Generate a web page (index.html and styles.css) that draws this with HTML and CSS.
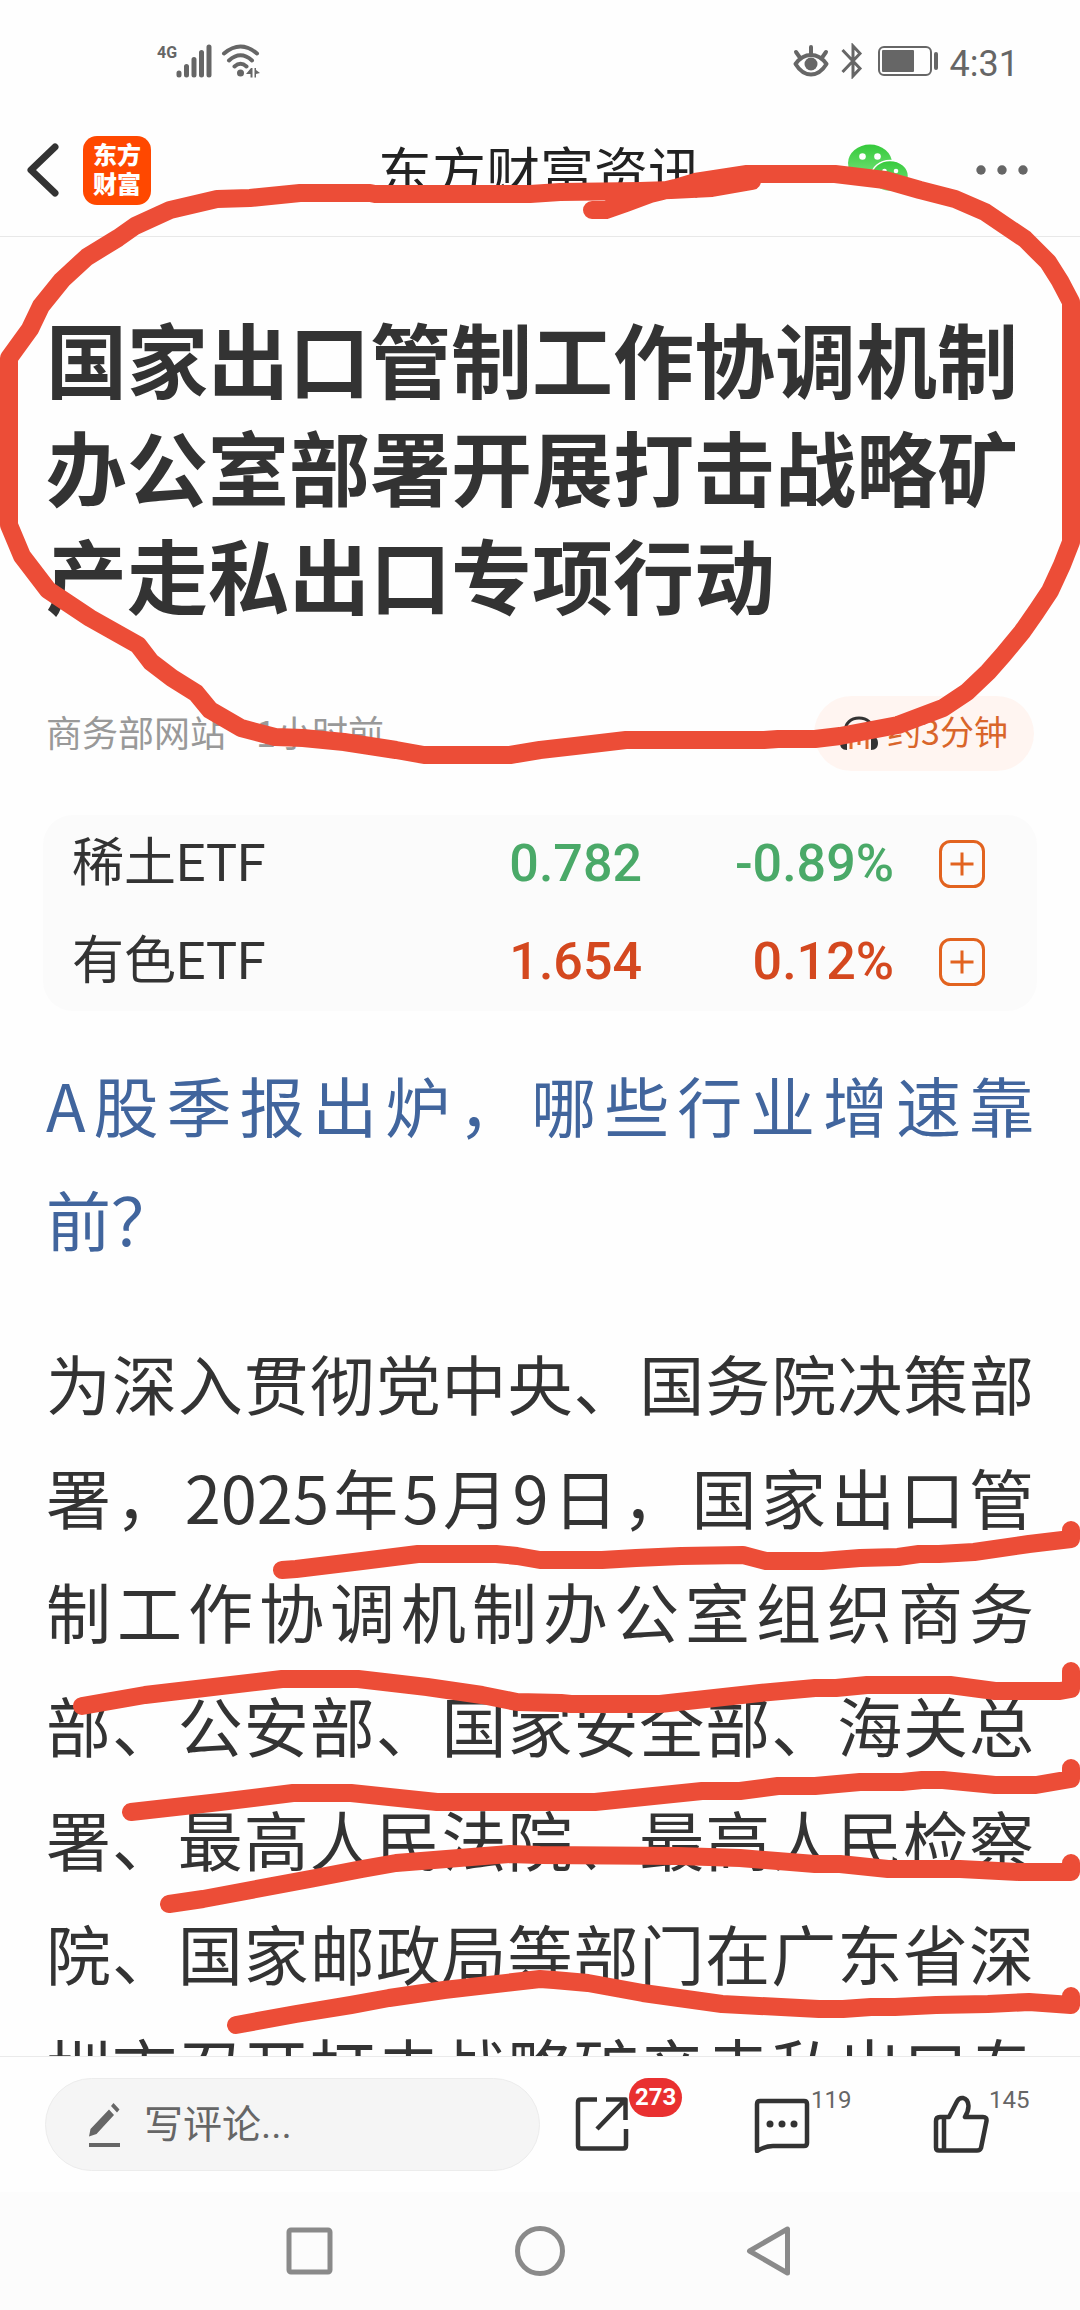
FILE: index.html
```html
<!DOCTYPE html>
<html lang="zh-CN">
<head>
<meta charset="utf-8">
<meta name="viewport" content="width=device-width, initial-scale=1">
<title>东方财富资讯</title>
<link rel="stylesheet" href="styles.css">
</head>
<body>
<div class="screen">
  <div class="status">
    <div class="status-group">
      <span class="network">4G</span>
      <svg class="signal" width="36" height="34" viewBox="0 0 36 34" fill="none" stroke="#666" stroke-width="5" stroke-linecap="round"><path d="M3 29v2M10.500 22.500v8.500M18 15.500v15.500M25.500 8.500v22.500M33 3v28"/></svg>
      <svg class="wifi" width="40" height="34" viewBox="0 0 40 34" fill="none" stroke="#666" stroke-width="4" stroke-linecap="round"><path d="M3 9.500Q19.500-4.500 36 9.500M8 16.500Q19.500 6 31 16.500M13.500 22.500Q19.500 17 25.500 22.500"/><circle cx="19.500" cy="29" r="3.500" fill="#666" stroke="none"/><path d="M25 30l5-6h1.500v9.500h-2V30zM33.500 24h1.500v2l4 3-4 1v3.500h-1.500z" fill="#666" stroke="none"/></svg>
    </div>
    <div class="status-group">
      <svg width="36" height="34" viewBox="0 0 36 34" fill="none" stroke="#666" stroke-width="4" stroke-linecap="round" stroke-linejoin="round"><path d="M2.500 20Q9 11 18 11T33.500 20Q27 30.500 18 30.500T2.500 20zM18 3v8M3 8l3.500 5M33 8l-3.500 5"/><circle cx="18" cy="20" r="6.500" fill="#666" stroke="none"/></svg>
      <svg class="bluetooth" width="22" height="36" viewBox="0 0 22 36" fill="none" stroke="#666" stroke-width="3"><path d="M1.500 7L19 25.500 12 33V3l7 7.500L1.500 29"/></svg>
      <svg class="battery" width="60" height="30" viewBox="0 0 60 30"><rect x="1" y="1" width="52" height="28" rx="5" fill="none" stroke="#666" stroke-width="2"/><rect x="4" y="4" width="32" height="22" rx="1" fill="#666"/><rect x="56" y="6" width="4" height="18" rx="2" fill="#666"/></svg>
      <span class="clock">4:31</span>
    </div>
  </div>

  <header class="topbar">
    <div class="topbar-left">
      <button class="icon-button" aria-label="返回"><svg width="34" height="56" viewBox="0 0 34 56" fill="none" stroke="#333" stroke-width="7" stroke-linecap="round" stroke-linejoin="round"><path d="M29 5L5 28l24 23"/></svg></button>
      <a class="logo" href="#">东方<br>财富</a>
    </div>
    <span class="topbar-title">东方财富资讯</span>
    <div class="topbar-right">
      <button class="icon-button" aria-label="微信分享"><svg width="62" height="52" viewBox="0 0 62 52"><defs><linearGradient id="leaf" x1="0" y1="0" x2="0" y2="1"><stop offset="0" stop-color="#35c93b"/><stop offset="1" stop-color="#7be67f"/></linearGradient></defs><ellipse cx="22" cy="19" rx="22" ry="18.500" fill="url(#leaf)"/><path d="M8 30l-2 9 9-4z" fill="#6de072"/><circle cx="14.500" cy="12.500" r="3.300" fill="#fff"/><circle cx="29.500" cy="12.500" r="3.300" fill="#fff"/><ellipse cx="42" cy="32" rx="18.500" ry="15.500" fill="url(#leaf)" stroke="#fff" stroke-width="1.500"/><circle cx="36.500" cy="27" r="2.300" fill="#fff"/><circle cx="48" cy="27" r="2.300" fill="#fff"/></svg></button>
      <button class="icon-button" aria-label="更多"><svg width="52" height="10" viewBox="0 0 52 10" fill="#666"><circle cx="5" cy="5" r="4.700"/><circle cx="26" cy="5" r="4.700"/><circle cx="47" cy="5" r="4.700"/></svg></button>
    </div>
  </header>

  <main class="article">
    <h1 class="headline">国家出口管制工作协调机制办公室部署开展打击战略矿产走私出口专项行动</h1>
    <div class="byline">
      <span class="source">商务部网站</span>
      <span class="time">1小时前</span>
      <button class="listen"><svg width="40" height="38" viewBox="0 0 40 38" fill="none"><path d="M6 26V17C6 8 12 3 20 3s14 5 14 14v9" stroke="#333" stroke-width="3"/><path d="M8 21v14C3 35 1 32 1 28s2-7 7-7zM32 21v14c5 0 7-3 7-7s-2-7-7-7z" fill="#333"/><path d="M12 21v13M28 21v13M20 24v6" stroke="#e06a2c" stroke-width="3"/></svg><span>约3分钟</span></button>
    </div>

    <table class="quotes">
      <colgroup><col><col class="col-price"><col class="col-change"><col class="col-add"></colgroup>
      <tbody>
        <tr class="down">
          <th scope="row">稀土ETF</th><td>0.782</td><td>-0.89%</td>
          <td><button class="icon-button" aria-label="添加稀土ETF"><svg width="46" height="48" viewBox="0 0 46 48" fill="none" stroke="#e2631f" stroke-width="3"><rect x="1.500" y="1.500" width="43" height="45" rx="10"/><path d="M11.500 24h23M23 12.500v23"/></svg></button></td>
        </tr>
        <tr class="up">
          <th scope="row">有色ETF</th><td>1.654</td><td>0.12%</td>
          <td><button class="icon-button" aria-label="添加有色ETF"><svg width="46" height="48" viewBox="0 0 46 48" fill="none" stroke="#e2631f" stroke-width="3"><rect x="1.500" y="1.500" width="43" height="45" rx="10"/><path d="M11.500 24h23M23 12.500v23"/></svg></button></td>
        </tr>
      </tbody>
    </table>

    <a class="promo" href="#">A股季报出炉，哪些行业增速靠前？</a>
    <p class="story">为深入贯彻党中央、国务院决策部署，2025年5月9日，国家出口管制工作协调机制办公室组织商务部、公安部、国家安全部、海关总署、最高人民法院、最高人民检察院、国家邮政局等部门在广东省深圳市召开打击战略矿产走私出口专</p>
  </main>

  <footer class="actionbar">
    <label class="comment">
      <svg width="34" height="46" viewBox="0 0 34 46" fill="#666"><path d="M21 7.500l5 5.500L8.500 32 1 34.500 2.500 27zM23 4l2.500-3 6 6.500-2.500 3z"/><path d="M1 41h31v4H1z"/></svg>
      <input type="text" placeholder="写评论..." aria-label="写评论">
    </label>
    <div class="actions">
      <button class="action" aria-label="分享"><svg width="54" height="58" viewBox="0 0 54 58" fill="none" stroke="#333" stroke-width="4.500" stroke-linejoin="round"><path d="M22 4.500H6q-3 0-3 3v43q0 3 3 3h42q3 0 3-3V34M31 4.500h19.500V25M50 5L22 34" stroke-linecap="butt"/></svg><span class="badge">273</span></button>
      <button class="action" aria-label="评论"><svg width="60" height="58" viewBox="-3 0 60 58" fill="none" stroke="#333" stroke-width="4.500" stroke-linejoin="round"><path d="M6 6h44q3 0 3 3v39q0 3-3 3H19Q11 51 3 56V9q0-3 3-3z"/><g fill="#333" stroke="none"><circle cx="16" cy="29" r="3.500"/><circle cx="28" cy="29" r="3.500"/><circle cx="40" cy="29" r="3.500"/></g></svg><span class="count">119</span></button>
      <button class="action" aria-label="点赞"><svg width="56" height="58" viewBox="0 0 56 58" fill="none" stroke="#333" stroke-width="4.500" stroke-linejoin="round"><path d="M11 22h5l8-15.500Q26 2.500 30 3q5 1 5.500 8Q35.500 16 32 22h18q4 0 3.500 4L48 53q-1 2.500-4 2.500H6q-3 0-3-3V26q0-4 4-4zM11 22v33"/></svg><span class="count">145</span></button>
    </div>
  </footer>

  <nav class="sysnav">
    <button class="icon-button" aria-label="最近任务"><svg width="50" height="52" viewBox="0 0 50 52" fill="none" stroke="#8a8a8a" stroke-width="5"><rect x="4" y="5" width="41" height="42" rx="2"/></svg></button>
    <button class="icon-button" aria-label="主屏幕"><svg width="50" height="52" viewBox="0 0 50 52" fill="none" stroke="#8a8a8a" stroke-width="5"><circle cx="25" cy="26" r="22.500"/></svg></button>
    <button class="icon-button" aria-label="返回上一级"><svg width="50" height="52" viewBox="0 0 50 52" fill="none" stroke="#8a8a8a" stroke-width="5" stroke-linejoin="round"><path d="M42.500 4v44L4.500 26z"/></svg></button>
  </nav>

  <svg class="marker" viewBox="0 0 1080 2310" preserveAspectRatio="none" aria-hidden="true">
    <path d="M592 210L606 210 626 203 650 194 675 188 695 182 747 174 835 174 885 180 920 190 955 199 985 212 1025 239 1048 262 1060 281 1071 302V542L1062 565 1050 591 1036 612 1022 632 1003 655 988 672 967 692 943 708 898 725 840 736 815 739 778 739 764 740 626 740 575 746 540 750 510 755 424 755 396 750 344 742 303 738 275 737 241 728 210 710 196 693 172 678 151 662 138 645 90 618 48 590 22 556 9 525V358L30 329 41 306 62 280 87 257 118 238 135 226 170 210 217 199 250 198 300 193 370 193 375 194 530 194 560 192 640 191 671 190 712 188 752 181"/>
    <path d="M282 1570L296 1569 362 1561 418 1554 496 1554 517 1556 540 1560 602 1560 636 1558 681 1556 743 1555 766 1561 822 1561 860 1558 898 1557 919 1554 939 1554 974 1552 1029 1544 1071 1539V1530"/>
    <path d="M82 1706L145 1695 282 1679 358 1679 427 1687 482 1695 517 1702 561 1703 571 1704 660 1704 760 1693 815 1688 836 1688 867 1685 950 1685 995 1691 1060 1691 1071 1689V1671"/>
    <path d="M131 1812L220 1802 293 1793 351 1793 437 1802 595 1802 702 1791 740 1791 778 1786 815 1786 860 1782 902 1782 922 1780 943 1780 995 1785 1036 1785 1071 1779V1768"/>
    <path d="M169 1904L203 1899 310 1879 362 1869 396 1863 510 1854 540 1855 678 1856 740 1858 815 1864 840 1864 888 1869 960 1869 1019 1872 1071 1872V1863"/>
    <path d="M236 2025L296 2014 351 2005 389 1998 444 1990 540 1979 554 1980 588 1983 643 1993 722 2004 819 2009 843 2009 871 2007 895 2007 936 2005 988 2004 1029 2002 1071 2005V1996"/>
  </svg>
</div>
</body>
</html>
```

FILE: styles.css
```css
* {
  box-sizing: border-box;
}

body {
  margin: 0;
  background: #fefefe;
  color: #333;
  font-family: "Noto Sans CJK SC", sans-serif;
}

button,
input {
  margin: 0;
  padding: 0;
  border: 0;
  background: none;
  color: inherit;
  font: inherit;
}

a {
  color: inherit;
  text-decoration: none;
}

svg {
  display: block;
  flex: none;
}

.screen {
  position: relative;
  display: flex;
  flex-direction: column;
  height: 100vh;
  overflow: hidden;
}

.icon-button {
  display: block;
}

/* Status bar */
.status {
  display: flex;
  flex: none;
  justify-content: space-between;
  height: 104px;
  padding: 18px 61px 0 157px;
  color: #666;
}

.status-group {
  display: flex;
  align-items: center;
}

.network {
  align-self: flex-start;
  width: 19px;
  margin-top: 25px;
  font: bold 16px/20px Roboto, sans-serif;
}

.wifi {
  margin-left: 9px;
}

.bluetooth {
  margin-left: 12px;
}

.battery {
  margin: 0 12px 0 15px;
}

.clock {
  padding-top: 6px;
  font: 36px/40px Roboto, sans-serif;
}

/* Top bar */
.topbar {
  display: grid;
  flex: none;
  grid-template-columns: 1fr auto 1fr;
  align-items: center;
  height: 133px;
  padding: 0 52px 0 26px;
  border-bottom: 1px solid #e8e8e8;
}

.topbar-left,
.topbar-right {
  display: flex;
  align-items: center;
}

.topbar-left {
  gap: 23px;
}

.topbar-right {
  justify-content: flex-end;
  gap: 66px;
}

.topbar-title {
  padding-left: 26px;
  font-size: 54px;
  line-height: 64px;
  color: #222;
}

.logo {
  width: 68px;
  height: 69px;
  padding-top: 3px;
  border-radius: 14px;
  background: #ff4800;
  color: #fff;
  font-size: 24px;
  font-weight: 900;
  line-height: 29px;
  text-align: center;
}

/* Article */
.article {
  flex: 1;
  min-height: 0;
  padding: 66px 46px 0;
  overflow: hidden;
}

.headline {
  margin: 0;
  font-size: 81px;
  font-weight: 700;
  line-height: 108px;
}

.byline {
  display: flex;
  align-items: center;
  margin-top: 69px;
  color: #999;
  font-size: 36px;
  line-height: 52px;
}

.byline span {
  padding-bottom: 6px;
}

.time {
  margin-left: 30px;
}

.listen {
  display: flex;
  align-items: center;
  gap: 8px;
  height: 75px;
  margin-left: auto;
  padding: 0 26px 0 25px;
  border-radius: 38px;
  background: #fff5f1;
  color: #d9652a;
  font-size: 34px;
}

.quotes {
  width: calc(100% + 6px);
  margin: 44px -3px 36px;
  border-spacing: 0;
  border-radius: 30px;
  background: #fbfbfb;
  font: 52px/60px Roboto, "Noto Sans CJK SC", sans-serif;
  table-layout: fixed;
}

.quotes th,
.quotes td {
  height: 98px;
  padding: 0;
  font-weight: 500;
  text-align: right;
}

.quotes th {
  padding-left: 29px;
  font-weight: 400;
  text-align: left;
}

.quotes td:last-child {
  padding-left: 45px;
}

.col-price {
  width: 200px;
}

.col-change {
  width: 252px;
}

.col-add {
  width: 143px;
}

.down td {
  color: #4aa968;
}

.up td {
  color: #d4481f;
}

.promo,
.story {
  display: block;
  margin: 0;
  font-size: 65px;
  line-height: 114px;
  text-align: justify;
}

.promo {
  color: #41659d;
}

.story {
  margin-top: 50px;
  text-align-last: justify;
}

/* Bottom action bar */
.actionbar {
  display: flex;
  flex: none;
  align-items: center;
  height: 136px;
  padding: 0 91px 0 45px;
  border-top: 1px solid #eaeaea;
}

.comment {
  display: flex;
  flex: 1;
  align-items: center;
  gap: 22px;
  min-width: 0;
  height: 93px;
  padding: 0 42px;
  border: 1px solid #ececec;
  border-radius: 47px;
  background: #f5f5f5;
}

.comment input {
  flex: 1;
  min-width: 0;
  font: 39px/56px Roboto, "Noto Sans CJK SC", sans-serif;
}

.comment input::placeholder {
  color: #666;
  opacity: 1;
}

.actions {
  display: flex;
  flex: none;
  align-items: center;
  justify-content: space-between;
  width: 414px;
  margin-left: 35px;
  padding-bottom: 2px;
}

.action {
  position: relative;
  font: 24px/23px Roboto, sans-serif;
}

.badge,
.count {
  position: absolute;
  left: 100%;
}

.badge {
  top: -17px;
  padding: 8px 6px;
  border-radius: 20px;
  background: #e93030;
  color: #fff;
  font-weight: 700;
}

.count {
  top: -6px;
  color: #666;
}

/* System navigation */
.sysnav {
  display: flex;
  flex: none;
  align-items: center;
  justify-content: center;
  gap: 180px;
  height: 118px;
  background: #fcfcfc;
}

/* Hand-drawn highlights over the page */
.marker {
  position: absolute;
  inset: 0;
  width: 100%;
  height: 100%;
  fill: none;
  stroke: #ec4d37;
  stroke-width: 18px;
  stroke-linecap: round;
  stroke-linejoin: round;
  pointer-events: none;
}
```
